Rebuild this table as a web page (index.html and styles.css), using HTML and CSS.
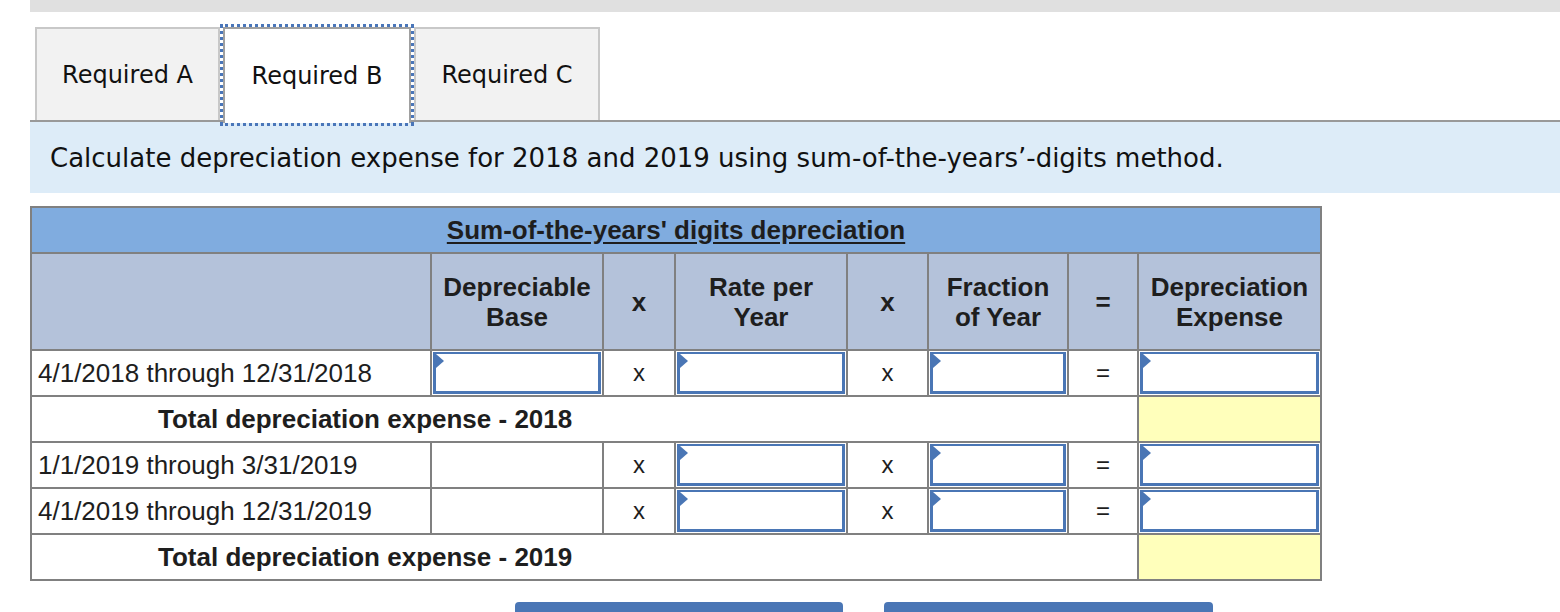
FILE: index.html
```html
<!DOCTYPE html>
<html>
<head>
<meta charset="utf-8">
<link rel="stylesheet" href="styles.css">
</head>
<body>
<div class="page">
  <div class="topbar"></div>
  <div class="tabs">
    <div class="tab tab-a">Required A</div>
    <div class="tab tab-b active">Required B</div>
    <div class="tab tab-c">Required C</div>
  </div>
  <div class="instr">Calculate depreciation expense for 2018 and 2019 using sum-of-the-years’-digits method.</div>
  <table class="grid">
    <colgroup>
      <col class="c-label"><col class="c-base"><col class="c-op1"><col class="c-rate"><col class="c-op2"><col class="c-frac"><col class="c-eq"><col class="c-exp">
    </colgroup>
    <tr class="title-row"><td colspan="8"><span class="title">Sum-of-the-years' digits depreciation</span></td></tr>
    <tr class="head-row">
      <th></th>
      <th>Depreciable<br>Base</th>
      <th>x</th>
      <th>Rate per<br>Year</th>
      <th>x</th>
      <th>Fraction<br>of Year</th>
      <th>=</th>
      <th>Depreciation<br>Expense</th>
    </tr>
    <tr class="row">
      <td class="label">4/1/2018 through 12/31/2018</td>
      <td class="in"><div class="input"></div></td>
      <td class="op">x</td>
      <td class="in"><div class="input"></div></td>
      <td class="op">x</td>
      <td class="in"><div class="input"></div></td>
      <td class="op">=</td>
      <td class="in"><div class="input"></div></td>
    </tr>
    <tr class="row total">
      <td colspan="7" class="total-label">Total depreciation expense - 2018</td>
      <td class="yellow"></td>
    </tr>
    <tr class="row">
      <td class="label">1/1/2019 through 3/31/2019</td>
      <td></td>
      <td class="op">x</td>
      <td class="in"><div class="input"></div></td>
      <td class="op">x</td>
      <td class="in"><div class="input"></div></td>
      <td class="op">=</td>
      <td class="in"><div class="input"></div></td>
    </tr>
    <tr class="row">
      <td class="label">4/1/2019 through 12/31/2019</td>
      <td></td>
      <td class="op">x</td>
      <td class="in"><div class="input"></div></td>
      <td class="op">x</td>
      <td class="in"><div class="input"></div></td>
      <td class="op">=</td>
      <td class="in"><div class="input"></div></td>
    </tr>
    <tr class="row total">
      <td colspan="7" class="total-label">Total depreciation expense - 2019</td>
      <td class="yellow"></td>
    </tr>
  </table>
  <div class="buttons">
    <div class="btn btn-prev"></div>
    <div class="btn btn-next"></div>
  </div>
</div>
</body>
</html>
```

FILE: styles.css
```css
html, body {
  margin: 0;
  padding: 0;
  background: #ffffff;
}
.page {
  width: 1560px;
  height: 612px;
  overflow: hidden;
}
.topbar {
  margin-left: 30px;
  height: 12px;
  background: #e0e0e0;
}
.tabs {
  display: flex;
  margin-top: 15px;
  padding-left: 35px;
  height: 93px;
}
.tab {
  box-sizing: border-box;
  height: 93px;
  border: 2px solid #c8c8c8;
  border-bottom: none;
  background: #f2f2f2;
  font-family: "DejaVu Sans", Verdana, sans-serif;
  font-size: 24px;
  color: #111;
  display: flex;
  align-items: center;
  justify-content: center;
}
.tab-a { width: 185px; }
.tab-b {
  width: 188px;
  margin-left: 3px;
  background: #ffffff;
  border-color: #a0a0a0;
  outline: 3px dotted #4a76b9;
  outline-offset: 0;
  position: relative;
  z-index: 2;
  height: 96px;
}
.tab-c { width: 186px; margin-left: 3px; }
.instr {
  margin-left: 30px;
  border-top: 2px solid #999999;
  background: #ddecf8;
  height: 73px;
  box-sizing: border-box;
  padding-left: 20px;
  display: flex;
  align-items: center;
  font-family: "DejaVu Sans", Verdana, sans-serif;
  font-size: 26px;
  color: #111;
}
.grid {
  margin-top: 13px;
  margin-left: 30px;
  width: 1290px;
  table-layout: fixed;
  border-collapse: collapse;
  border: 2px solid #808080;
  font-family: "Liberation Sans", Arial, sans-serif;
  font-size: 26px;
  color: #1e1e1e;
}
.c-label { width: 400px; }
.c-base { width: 172px; }
.c-op1 { width: 72px; }
.c-rate { width: 172px; }
.c-op2 { width: 81px; }
.c-frac { width: 140px; }
.c-eq { width: 70px; }
.c-exp { width: 183px; }
.grid td, .grid th {
  border: 2px solid #808080;
  padding: 0;
}
.title-row td {
  background: #80acdf;
  height: 44px;
  text-align: center;
  font-weight: bold;
}
.title {
  text-decoration: underline;
  text-underline-offset: 3px;
}
.head-row th {
  background: #b4c2da;
  height: 95px;
  font-weight: bold;
  line-height: 30px;
  text-align: center;
}
.row td {
  height: 44px;
  vertical-align: middle;
}
.label {
  padding-left: 6px !important;
  white-space: nowrap;
}
.op {
  text-align: center;
  font-size: 24px;
}
.in {
  padding: 0;
}
.input {
  box-sizing: border-box;
  height: 42px;
  margin: 0 1px;
  border: 3px solid #4a76b5;
  border-width: 2px 3px 3px 3px;
  background: #ffffff;
  position: relative;
}
.input::before {
  content: "";
  position: absolute;
  left: 0;
  top: 0;
  border-top: 7px solid transparent;
  border-bottom: 7px solid transparent;
  border-left: 8px solid #4a76b5;
}
.total-label {
  font-weight: bold;
  padding-left: 126px !important;
  text-align: left;
}
.yellow {
  background: #ffffbb;
}
.buttons {
  position: relative;
  height: 40px;
  margin-top: 21px;
}
.btn {
  position: absolute;
  top: 0;
  height: 40px;
  background: #4a76b5;
  border-radius: 4px;
}
.btn-prev { left: 515px; width: 328px; }
.btn-next { left: 884px; width: 329px; }
```
